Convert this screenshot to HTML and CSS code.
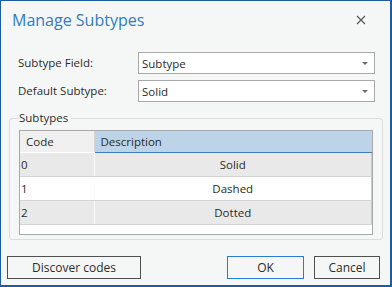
FILE: index.html
```html
<!DOCTYPE html>
<html>
<head>
	<meta charset="utf-8">
	<title>Manage Subtypes</title>
	<link rel="stylesheet" href="styles.css">
</head>
<body>
<div class="dialog">
	<!-- title bar -->
	<div class="title-bar">
		<h1 class="title">Manage Subtypes</h1>
		<button class="close" aria-label="Close">
			<svg viewBox="0 0 10 10" width="10" height="10">
				<path d="M1 1 L9 9 M9 1 L1 9" stroke="#5a5a5a" stroke-width="1.2" fill="none"></path>
			</svg>
		</button>
	</div>

	<!-- field selectors -->
	<div class="fields">
		<label class="field-label">Subtype Field:</label>
		<div class="combo"><span>Subtype</span><i class="caret"></i></div>
		<label class="field-label">Default Subtype:</label>
		<div class="combo"><span>Solid</span><i class="caret"></i></div>
	</div>

	<!-- subtypes grid -->
	<fieldset class="group">
		<legend>Subtypes</legend>
		<div class="grid-box">
			<table class="grid">
				<thead>
					<tr>
						<th class="col-code">Code</th>
						<th class="col-desc">Description</th>
					</tr>
				</thead>
				<tbody>
					<tr class="alt"><td class="code">0</td><td class="desc">Solid</td></tr>
					<tr><td class="code">1</td><td class="desc">Dashed</td></tr>
					<tr class="alt"><td class="code">2</td><td class="desc">Dotted</td></tr>
				</tbody>
			</table>
		</div>
	</fieldset>

	<!-- buttons -->
	<div class="footer">
		<button class="btn btn-wide">Discover codes</button>
		<div class="spacer"></div>
		<button class="btn btn-ok">OK</button>
		<button class="btn btn-cancel">Cancel</button>
	</div>
</div>
</body>
</html>
```

FILE: styles.css
```css
* {
  box-sizing: border-box;
  margin: 0;
  padding: 0;
}
body {
  background: #f5f7f7;
  font-family: "Open Sans", "Noto Sans", sans-serif;
  font-size: 11.5px;
  color: #2b2b2b;
}

/* outer window with its blue frame */
.dialog {
  width: 392px;
  height: 287px;
  border: 1px solid #1d5d9f;
  border-right-width: 2px;
  border-bottom-width: 2px;
  background: #f5f7f7;
  display: flex;
  flex-direction: column;
}

.title-bar {
  height: 51px;
  display: flex;
  align-items: flex-start;
  justify-content: space-between;
  padding: 7px 23px 0 11px;
}
.title {
  font-size: 16px;
  font-weight: normal;
  color: #2f7cc3;
  line-height: 24px;
}
.close {
  border: 0;
  background: none;
  width: 12px;
  height: 12px;
  margin-top: 6px;
  display: flex;
  align-items: center;
  justify-content: center;
}

/* label / combo rows */
.fields {
  display: grid;
  grid-template-columns: 120px 1fr;
  row-gap: 6px;
  margin: 0 15px 0 17px;
}
.field-label {
  line-height: 22px;
}
.combo {
  height: 22px;
  background: #fff;
  border: 1px solid #a9a9a9;
  display: flex;
  align-items: center;
  justify-content: space-between;
  padding: 0 6px 0 3px;
}
.caret {
  width: 0;
  height: 0;
  border-left: 3px solid transparent;
  border-right: 3px solid transparent;
  border-top: 3px solid #6a6a6a;
}

/* group box */
.group {
  margin: 8px 7px 0 8px;
  border: 1px solid #dcdcdc;
  border-radius: 3px;
  padding: 0 9px 4px 9px;
  height: 130px;
}
.group legend {
  margin-left: 0;
  padding: 0 3px 0 0;
  line-height: 16px;
}
.grid-box {
  margin-top: 4px;
  height: 105px;
  background: #fff;
  border: 1px solid #a8a8a8;
}
.grid {
  width: 100%;
  border-collapse: collapse;
}
.grid th {
  height: 21px;
  font-weight: normal;
  text-align: left;
  padding: 0 6px;
  border-bottom: 1px solid #fff;
}
.grid .col-code {
  width: 74px;
  background: #f0f0f0;
  border-right: 1px solid #d6d6d6;
}
.grid .col-desc {
  background: #bcd3e8;
  border-bottom: 1px solid #3c7cc0;
}
.grid td {
  height: 24px;
  border-bottom: 1px solid #d4d4d4;
  border-right: 1px solid #d4d4d4;
}
.grid tr.alt td {
  background: #e9e9e9;
}
.grid .code {
  padding-left: 1px;
  border-right-color: #fafafa;
}
.grid .desc {
  text-align: center;
  border-right-color: #c8c8c8;
}

/* dialog buttons */
.footer {
  display: flex;
  margin: 16px 10px 0 6px;
  gap: 10px;
}
.spacer {
  flex: 1;
}
.btn {
  height: 23px;
  background: #f5f7f7;
  border: 1px solid #4f4f4f;
  font-family: inherit;
  font-size: 12px;
  color: #2b2b2b;
}
.btn-wide {
  width: 134px;
}
.btn-ok {
  width: 77px;
  border-color: #2a7bd3;
}
.btn-cancel {
  width: 66px;
}
```
